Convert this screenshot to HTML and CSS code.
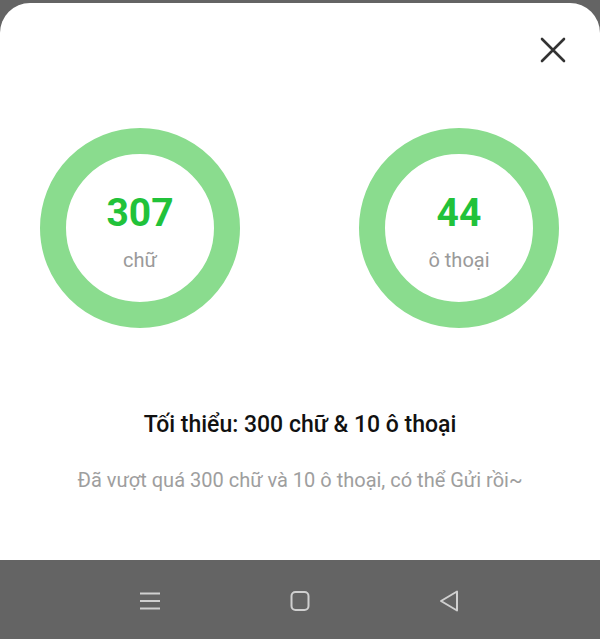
FILE: index.html
```html
<!DOCTYPE html>
<html lang="vi">
<head>
<meta charset="utf-8">
<link rel="stylesheet" href="styles.css">
</head>
<body>
<div class="screen">
  <div class="sheet">
    <div class="top">
      <button class="close" aria-label="close">
        <svg width="26" height="26" viewBox="0 0 26 26"><path d="M2 2 L24 24 M24 2 L2 24" stroke="#333" stroke-width="2.6" stroke-linecap="round" fill="none"/></svg>
      </button>
    </div>
    <div class="stats">
      <div class="ring"><div class="num">307</div><div class="unit">chữ</div></div>
      <div class="ring"><div class="num">44</div><div class="unit">ô thoại</div></div>
    </div>
    <div class="title">Tối thiểu: 300 chữ &amp; 10 ô thoại</div>
    <div class="sub">Đã vượt quá 300 chữ và 10 ô thoại, có thể Gửi rồi~</div>
  </div>
  <div class="nav">
    <svg width="22" height="22" viewBox="0 0 22 22"><path d="M1 3.5H21M1 11H21M1 18.5H21" stroke="#d0d0d0" stroke-width="2" fill="none"/></svg>
    <svg width="22" height="22" viewBox="0 0 22 22"><rect x="2.5" y="2" width="17" height="18" rx="4" stroke="#d0d0d0" stroke-width="2" fill="none"/></svg>
    <svg width="22" height="22" viewBox="0 0 22 22"><path d="M18 1.5V20.5L2 11Z" stroke="#d0d0d0" stroke-width="2" stroke-linejoin="round" fill="none"/></svg>
  </div>
</div>
</body>
</html>
```
FILE: styles.css
```css
html, body { margin: 0; padding: 0; }
body { background: #646464; font-family: Roboto, "Noto Sans", sans-serif; }
.screen { width: 600px; height: 639px; display: flex; flex-direction: column; }
.sheet {
  margin-top: 3px;
  height: 557px;
  background: #fff;
  border-radius: 30px 30px 0 0;
  display: flex; flex-direction: column; align-items: center;
}
.top { align-self: stretch; display: flex; justify-content: flex-end; padding: 34px 34px 0 0; height: 30px; }
.close { border: 0; background: none; padding: 0; width: 26px; height: 26px; cursor: pointer; }
.stats { margin-top: 61px; align-self: stretch; display: flex; justify-content: space-between; padding: 0 41px 0 40px; }
.ring {
  width: 148px; height: 148px;
  border: 26px solid #8adc8e;
  border-radius: 50%;
  display: flex; flex-direction: column; align-items: center; justify-content: center;
}
.num { color: #21c23a; font-size: 39px; font-weight: 700; line-height: 46px; margin-top: 6px; }
.unit { color: #9a9a9a; font-size: 20px; line-height: 24px; margin-top: 12px; }
.title { margin-top: 82px; font-size: 23px; font-weight: 500; color: #111; line-height: 30px; }
.sub { margin-top: 28px; font-size: 20px; color: #9e9e9e; line-height: 24px; }
.nav { flex: 1; display: flex; justify-content: center; align-items: center; gap: 128px; padding-top: 2px; }
```
